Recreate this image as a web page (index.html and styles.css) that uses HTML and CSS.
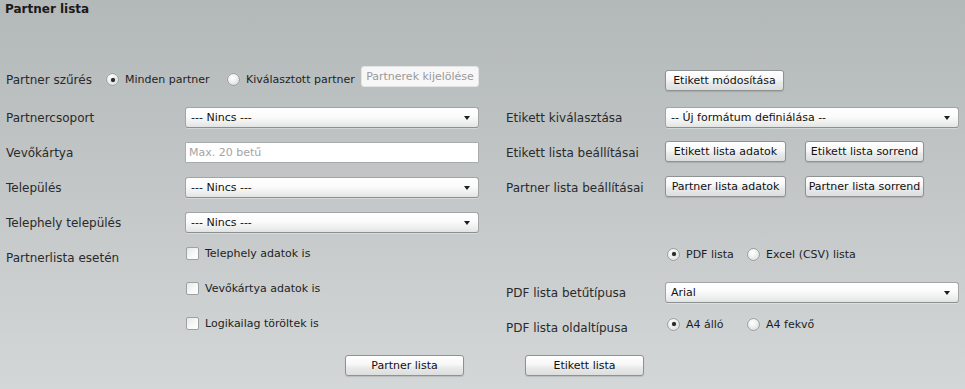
FILE: index.html
```html
<!DOCTYPE html>
<html lang="hu">
<head>
<meta charset="utf-8">
<title>Partner lista</title>
<link rel="stylesheet" href="styles.css">
</head>
<body>
<div class="page">
  <h1 class="title">Partner lista</h1>
  <div class="rows">
    <div class="row first">
      <div class="span2">
        <span class="label lw">Partner szűrés</span>
        <span class="opt ow-l"><span class="radio checked"></span>Minden partner</span>
        <span class="opt"><span class="radio"></span>Kiválasztott partner</span>
        <button class="btn disabled sel-btn">Partnerek kijelölése</button>
      </div>
      <div class="c4"><button class="btn w119 up6">Etikett módosítása</button></div>
    </div>

    <div class="row">
      <span class="label">Partnercsoport</span>
      <div class="select"><span>--- Nincs ---</span><span class="arrow"></span></div>
      <span class="label right">Etikett kiválasztása</span>
      <div class="select"><span>-- Új formátum definiálása --</span><span class="arrow"></span></div>
    </div>

    <div class="row">
      <span class="label">Vevőkártya</span>
      <input class="text" type="text" placeholder="Max. 20 betű">
      <span class="label right">Etikett lista beállításai</span>
      <div class="btns up2"><button class="btn w121">Etikett lista adatok</button><button class="btn w119">Etikett lista sorrend</button></div>
    </div>

    <div class="row">
      <span class="label">Település</span>
      <div class="select"><span>--- Nincs ---</span><span class="arrow"></span></div>
      <span class="label right">Partner lista beállításai</span>
      <div class="btns up2"><button class="btn w121">Partner lista adatok</button><button class="btn w119">Partner lista sorrend</button></div>
    </div>

    <div class="row">
      <span class="label">Telephely település</span>
      <div class="select"><span>--- Nincs ---</span><span class="arrow"></span></div>
    </div>

    <div class="row">
      <span class="label">Partnerlista esetén</span>
      <span class="check up8"><span class="box"></span>Telephely adatok is</span>
      <div class="opts c4 up7"><span class="opt ow-r"><span class="radio checked"></span>PDF lista</span><span class="opt"><span class="radio"></span>Excel (CSV) lista</span></div>
    </div>

    <div class="row">
      <span class="check c2 up8"><span class="box"></span>Vevőkártya adatok is</span>
      <span class="label right">PDF lista betűtípusa</span>
      <div class="select"><span>Arial</span><span class="arrow"></span></div>
    </div>

    <div class="row">
      <span class="check c2 up8"><span class="box"></span>Logikailag töröltek is</span>
      <span class="label right">PDF lista oldaltípusa</span>
      <div class="opts up7"><span class="opt ow-r"><span class="radio checked"></span>A4 álló</span><span class="opt"><span class="radio"></span>A4 fekvő</span></div>
    </div>
  </div>
  <div class="actions">
    <button class="btn w119">Partner lista</button>
    <button class="btn w119">Etikett lista</button>
  </div>
</div>
</body>
</html>
```
FILE: styles.css
```css
html, body {
  margin: 0;
  padding: 0;
}
body {
  width: 965px;
  height: 389px;
  overflow: hidden;
  background: linear-gradient(to bottom, #b3b8b8 0%, #c3c7c7 50%, #d3d7d7 100%);
  font-family: "DejaVu Sans", Verdana, sans-serif;
  color: #1e1e1e;
}
.page {
  padding-left: 6px;
}
.title {
  margin: 2px 0 0 -1px;
  font-size: 12px;
  font-weight: bold;
  line-height: 15px;
  color: #1a1a1a;
}
.rows {
  margin-top: 45px;
}
.row {
  display: grid;
  grid-template-columns: 179px 294px 186px 294px;
  height: 35px;
  align-items: center;
}
.row.first {
  margin-bottom: 3px;
}
.label {
  font-size: 12px;
  color: #2a2a2a;
  white-space: nowrap;
}
.label.right {
  grid-column: 3;
  padding-left: 27px;
}
.span2 {
  grid-column: 1 / 3;
  display: flex;
  align-items: center;
}
.lw {
  width: 100px;
  flex: none;
}
.c2 { grid-column: 2; }
.c4 { grid-column: 4; }
.up2 { margin-bottom: 2px; }
.up6 { margin-bottom: 6px; }
.up7 { margin-bottom: 7px; }
.up8 { margin-bottom: 8px; }

.opt {
  display: inline-flex;
  align-items: center;
  font-size: 11px;
  color: #1e1e1e;
  white-space: nowrap;
}
.ow-l { width: 121px; }
.ow-r { width: 80px; }
.opts {
  grid-column: 4;
  display: flex;
  align-items: center;
  padding-left: 2px;
}
.radio {
  width: 13px;
  height: 13px;
  box-sizing: border-box;
  border-radius: 50%;
  border: 1px solid #9a9d9d;
  background: radial-gradient(circle at 40% 35%, #ffffff 0%, #eef0f0 45%, #d2d5d5 100%);
  margin-right: 6px;
  flex: none;
  display: flex;
  align-items: center;
  justify-content: center;
  box-shadow: 0 0 1px rgba(255,255,255,0.6);
}
.radio.checked::after {
  content: "";
  width: 4px;
  height: 4px;
  border-radius: 50%;
  background: #2a2a2a;
  box-shadow: 0 0 1px #555;
}

.check {
  display: flex;
  align-items: center;
  font-size: 11px;
  color: #1e1e1e;
  padding-left: 1px;
  white-space: nowrap;
}
.box {
  width: 13px;
  height: 13px;
  box-sizing: border-box;
  border: 1px solid #9ea1a1;
  border-radius: 2px;
  background: linear-gradient(135deg, #e6e9e9 0%, #f7f8f8 55%, #ffffff 100%);
  margin-right: 6px;
  flex: none;
}

.select {
  width: 294px;
  height: 21px;
  box-sizing: border-box;
  border: 1px solid #a2a5a5;
  border-bottom-color: #8c8f8f;
  border-radius: 3px;
  background: linear-gradient(to bottom, #ffffff 0%, #fbfbfb 45%, #eceded 80%, #e2e3e3 100%);
  display: flex;
  align-items: center;
  justify-content: space-between;
  padding: 0 8px 0 5px;
  font-size: 11px;
  color: #111;
  box-shadow: 0 1px 0 rgba(255,255,255,0.35);
}
.arrow {
  width: 0;
  height: 0;
  border-left: 3.5px solid transparent;
  border-right: 3.5px solid transparent;
  border-top: 4px solid #1e1e1e;
}
.text {
  width: 294px;
  height: 21px;
  box-sizing: border-box;
  margin: 0;
  border: 1px solid #a9acac;
  border-radius: 1px;
  background: #ffffff;
  padding: 0 4px 0 3px;
  font-family: "DejaVu Sans", Verdana, sans-serif;
  font-size: 11px;
  color: #111;
  outline: none;
}
.text::placeholder {
  color: #a4a4a4;
}

.btn {
  height: 21px;
  box-sizing: border-box;
  margin: 0;
  padding: 0 2px;
  border: 1px solid #8f9292;
  border-radius: 3px;
  background: linear-gradient(to bottom, #ffffff 0%, #f7f7f7 45%, #e9eaea 60%, #dcdddd 100%);
  font-family: "DejaVu Sans", Verdana, sans-serif;
  font-size: 11px;
  color: #111;
  white-space: nowrap;
  box-shadow: 0 1px 1px rgba(0,0,0,0.12);
}
.btn.disabled {
  background: #f7f7f7;
  border-color: #e2e3e3;
  color: #9a9a9a;
  box-shadow: none;
}
.sel-btn {
  width: 118px;
  margin-left: auto;
  margin-bottom: 7px;
}
.w119 { width: 119px; }
.w121 { width: 121px; }
.btns {
  display: flex;
  gap: 19px;
}
.actions {
  display: flex;
  gap: 61px;
  margin: 10px 0 0 339px;
}
```
